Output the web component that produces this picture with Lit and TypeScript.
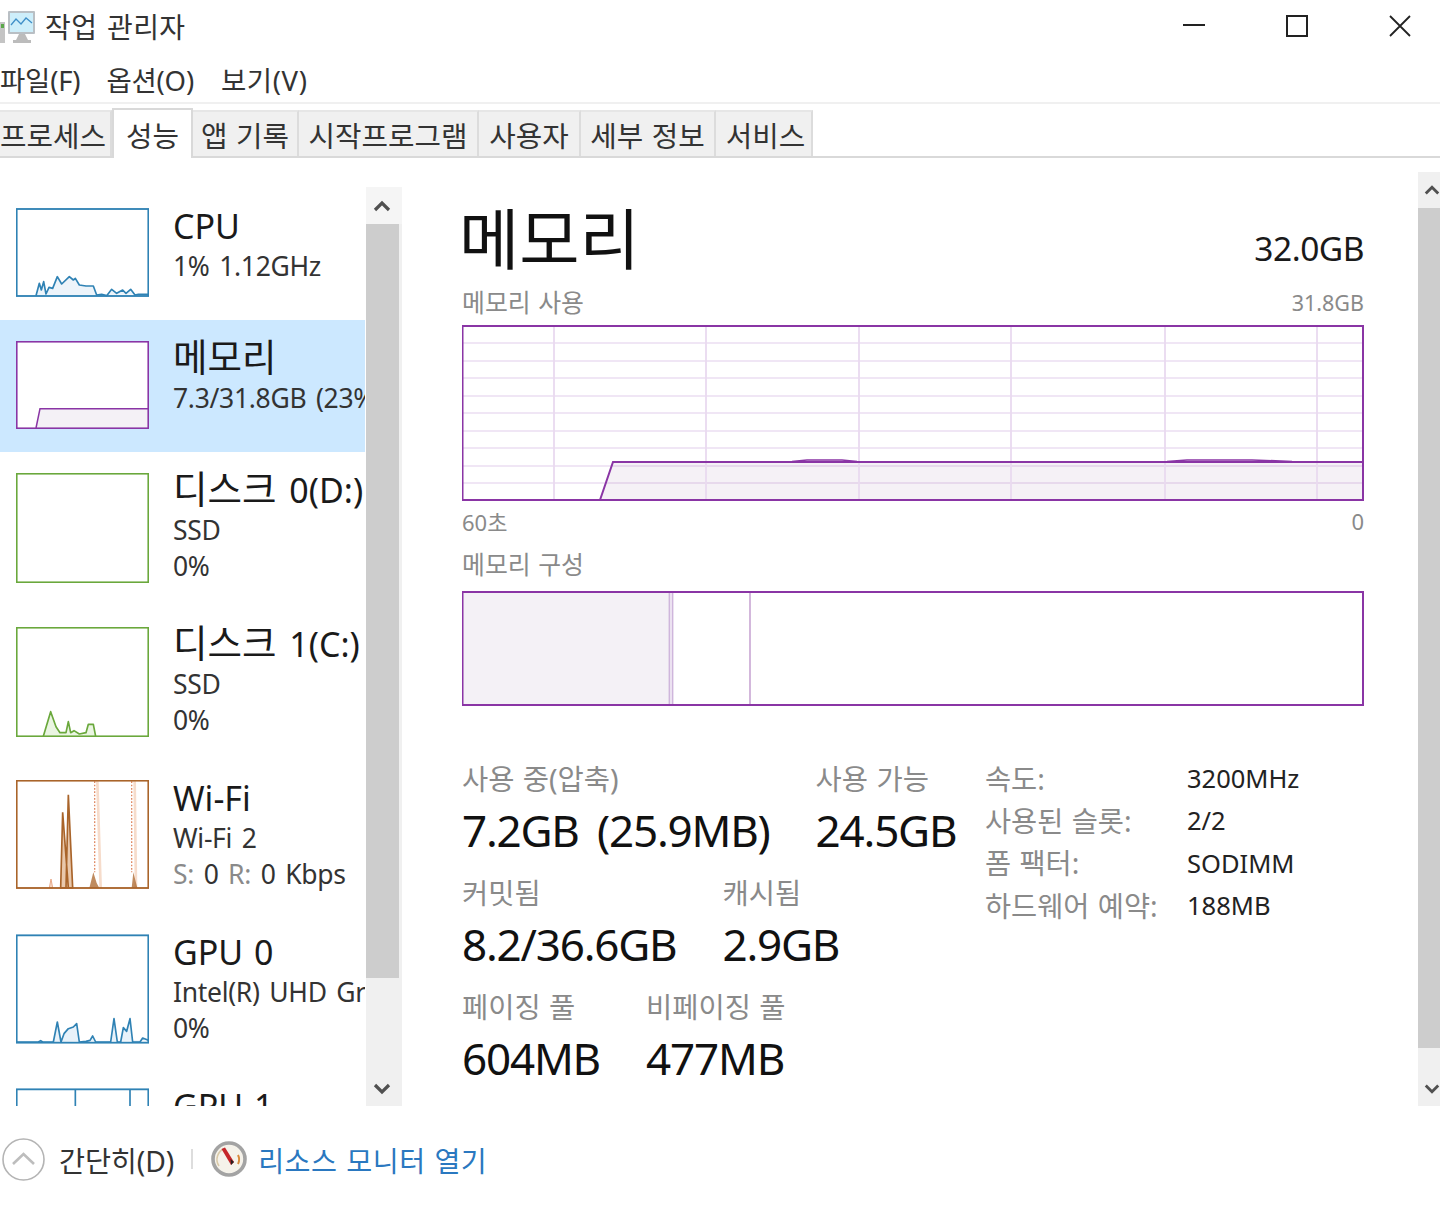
import { LitElement, html, css, svg } from "lit";
import { customElement } from "lit/decorators.js";

const BLUE = "#2f82b4";
const GREEN = "#6aa83c";
const ORANGE = "#a9642a";
const PURPLE = "#8a35a5";

const chevron = (up: boolean) => html`<svg class="chev" width="18" height="14" viewBox="0 0 18 14">
  <path d=${up ? "M2 11 L9 4 L16 11" : "M2 3 L9 10 L16 3"} fill="none" stroke="#505050" stroke-width="3.2"/></svg>`;

const line = (pts: string, color: string, fill: string) => svg`
  <polygon points=${pts} fill=${fill} stroke="none"/>
  <polyline points=${pts} fill="none" stroke=${color} stroke-width="5" stroke-linejoin="round"/>`;

const thumbs: Record<string, any> = {
  cpu: html`<svg class="thumb" style="height:89px" viewBox="48 25 399 265">
    ${line("108,287 118,250 124,270 131,245 138,282 147,262 158,265 172,230 185,252 208,230 220,240 226,235 238,255 258,258 280,258 290,285 305,283 320,287 335,268 350,280 368,270 378,280 392,268 405,285 415,283 445,283", BLUE, "#edf4fa")}
    <rect x="50" y="27" width="395" height="261" fill="none" stroke=${BLUE} stroke-width="5.5"/></svg>`,
  mem: html`<svg class="thumb" style="height:88px" viewBox="48 453 399 264">
    <polygon points="108,714 120,656 445,656 445,714" fill="#f4f1f6"/>
    <polyline points="108,714 120,656 445,656" fill="none" stroke=${PURPLE} stroke-width="4.5"/>
    <rect x="50" y="455" width="395" height="260" fill="none" stroke=${PURPLE} stroke-width="5.5"/></svg>`,
  d0: html`<svg class="thumb" style="height:110px" viewBox="48 45 399 330">
    <rect x="50" y="47" width="395" height="326" fill="#fff" stroke=${GREEN} stroke-width="5.5"/></svg>`,
  d1: html`<svg class="thumb" style="height:110px" viewBox="48 45 399 330" preserveAspectRatio="none">
    <g transform="translate(0,44)">${line("130,329 152,255 168,300 180,318 198,318 205,285 212,318 222,312 238,322 258,318 265,293 280,293 287,329", GREEN, "#eaf5e2")}</g>
    <rect x="50" y="47" width="395" height="326" fill="none" stroke=${GREEN} stroke-width="5.5"/></svg>`,
  wifi: html`<svg class="thumb" style="height:110px" viewBox="48 31 399 330">
    <path d="M288 35 L298 355 L306 355 L296 35 Z M400 35 L404 355 L412 355 L408 35 Z" fill="#f6dccb"/>
    <path d="M284 35 V308 M395 35 V308" stroke="#e08a63" stroke-width="4" stroke-dasharray="5 5" fill="none"/>
    <path d="M148 355 L153 328 L158 355 Z" fill="#f6dccb" stroke="#e8a888" stroke-width="3"/>
    <path d="M182 355 L188 128 L205 355 Z M198 355 L205 75 L218 355 Z" fill="#e9c8ac" stroke=${ORANGE} stroke-width="5"/>
    <path d="M268 355 L280 308 L290 340 L298 355 Z M395 355 L400 308 L412 355 Z" fill=${ORANGE} opacity=".75"/>
    <rect x="50" y="33" width="395" height="322" fill="none" stroke=${ORANGE} stroke-width="5.5"/></svg>`,
  gpu0: html`<svg class="thumb" style="height:110px" viewBox="48 28 399 326">
    ${line("50,350 115,350 122,346 128,350 160,350 172,290 183,350 192,325 205,310 220,305 230,295 238,350 258,348 270,345 278,332 287,350 332,350 342,280 352,350 362,350 370,307 380,318 390,280 398,350 420,350 428,338 445,345", BLUE, "#e8f2fa")}
    <rect x="50" y="30" width="395" height="322" fill="none" stroke=${BLUE} stroke-width="5.5"/></svg>`,
  gpu1: html`<svg class="thumb" style="height:110px" viewBox="48 28 399 326">
    <path d="M226 30 V352 M390 30 V352" stroke=${BLUE} stroke-width="5" fill="none"/>
    <rect x="50" y="30" width="395" height="322" fill="none" stroke=${BLUE} stroke-width="5.5"/></svg>`,
};

const items = [
  { k: "cpu", h: 133, n: "CPU", s: ["1% 1.12GHz"] },
  { k: "mem", h: 132, n: html`<span class="ko">메모리</span>`, s: ["7.3/31.8GB (23%)"], sel: true, up: true },
  { k: "d0", h: 154, n: html`<span class="ko">디스크</span> 0(D:)`, s: ["SSD", "0%"], up: true },
  { k: "d1", h: 153, n: html`<span class="ko">디스크</span> 1(C:)`, s: ["SSD", "0%"], up: true },
  { k: "wifi", h: 154, n: "Wi-Fi", s: ["Wi-Fi 2", html`<span class="dim">S:</span> 0 <span class="dim">R:</span> 0 Kbps`] },
  { k: "gpu0", h: 154, n: "GPU 0", s: ["Intel(R) UHD Graphics 620", "0%"] },
  { k: "gpu1", h: 154, n: "GPU 1", s: [] },
];

@customElement("app-root")
export class AppRoot extends LitElement {
  static styles = css`
    :host {
      display: block;
      width: 1440px;
      height: 1206px;
      overflow: hidden;
      background: #fff;
      color: #1c1c1c;
      font-family: "Noto Sans", "Noto Sans CJK KR", sans-serif;
      word-spacing: 1px;
    }
    .title { height: 52px; display: flex; align-items: center; }
    .title .name { font-size: 28px; margin-left: 8px; color: #333; letter-spacing: .4px; word-spacing: 2px; }
    .ctl { margin-left: auto; display: flex; gap: 81px; padding-right: 29px; }
    .menu { height: 52px; padding-top: 4px; box-sizing: border-box; display: flex; align-items: center; gap: 26px; font-size: 27.500px; color: #333; border-bottom: 2px solid #f0f0f0; letter-spacing: -.2px; }
    .menu span:last-child { margin-left: 1px; letter-spacing: .6px; }
    .tabs { height: 54px; box-sizing: border-box; display: flex; align-items: flex-end; border-bottom: 2px solid #d9d9d9; font-size: 28.800px; color: #333; }
    .tab { height: 44px; background: #f0f0f0; border-right: 2px solid #dcdcdc; border-top: 2px solid #e6e6e6; display: flex; align-items: center; justify-content: center; flex: none; white-space: nowrap; }
    .tab:last-child { text-indent: 4px; }
    .tab.first { justify-content: flex-start; }
    .tab.on { height: 48px; margin-bottom: -2px; background: #fff; border: 2px solid #d9d9d9; border-bottom: 0; }
    .main { height: 948px; display: flex; }
    .side { width: 402px; flex: none; padding-top: 29px; box-sizing: border-box; display: flex; gap: 1px; }
    .list { width: 365px; overflow: hidden; }
    .item { display: flex; box-sizing: border-box; padding: 21px 0 0 16px; gap: 24px; white-space: nowrap; overflow: hidden; }
    .item.sel { background: #cce8ff; }
    .item.up .info { margin-top: -2px; }
    .thumb { width: 133px; flex: none; display: block; background: #fff; }
    .info { display: flex; flex-direction: column; min-width: 0; }
    .n { font-size: 34px; line-height: 38px; margin-top: -1px; margin-bottom: 3px; color: #1a1a1a; word-spacing: 2px; }
    .ko { font-size: 37.500px; margin-right: 2px; }
    .s { font-size: 26.500px; line-height: 36px; color: #333; letter-spacing: -.3px; word-spacing: 3px; }
    .dim { color: #8a8a8a; }
    .bar { width: 36px; background: #f0f0f0; display: flex; flex-direction: column; }
    .bar .cap { height: 37px; display: flex; align-items: center; justify-content: center; background: #f5f5f5; padding-right: 4px; }
    .bar .th { height: 754px; width: 33px; background: #cdcdcd; }
    .bar .rest { flex: 1; display: flex; align-items: flex-end; justify-content: center; padding: 0 4px 10px 0; }
    .content { width: 902px; margin-left: 60px; flex: none; padding-top: 40px; box-sizing: border-box; }
    .h { display: flex; justify-content: space-between; align-items: center; height: 80px; }
    .h .big { font-size: 65.500px; line-height: 80px; color: #111; margin-left: -3px; padding-top: 2px; }
    .h .cap { font-size: 33.500px; margin-top: 20px; color: #1a1a1a; letter-spacing: -.5px; }
    .lab { display: flex; justify-content: space-between; align-items: center; height: 32px; margin-top: 7px; margin-bottom: 8px; font-size: 24.900px; color: #8a8a8a; }
    .lab .r { font-size: 21.500px; margin-top: 2px; }
    .chart { display: block; width: 902px; height: 176px; }
    .axis { display: flex; justify-content: space-between; align-items: center; height: 34px; margin-top: 3px; margin-bottom: 2px; font-size: 22px; color: #8a8a8a; }
    .lab2 { height: 32px; line-height: 32px; margin: 10px 0 11px; font-size: 24.900px; color: #8a8a8a; }
    .comp { display: block; width: 902px; height: 115px; }
    .stats { display: flex; margin-top: 54px; }
    .left { width: 523px; flex: none; display: flex; flex-direction: column; gap: 16px; }
    .row { display: flex; gap: 46px; }
    .st .l { font-size: 28.500px; line-height: 38px; height: 38px; color: #8a8a8a; white-space: nowrap; }
    .st .v { font-size: 44px; line-height: 56px; margin-top: 4px; color: #111; white-space: nowrap; letter-spacing: -1.200px; word-spacing: 8px; }
    .tbl { display: grid; grid-template-columns: 202px auto; grid-auto-rows: 42.300px; margin-top: -4px; align-items: center; font-size: 28.400px; }
    .tbl .k { color: #8a8a8a; white-space: nowrap; }
    .tbl .x { color: #222; font-size: 25.500px; padding-top: 2px; }
    .vs { margin-left: 54px; width: 22px; margin-top: 14px; background: #f0f0f0; overflow: hidden; display: flex; flex-direction: column; flex: none; }
    .vs .cap { height: 36px; display: flex; align-items: center; padding-left: 6px; box-sizing: border-box; }
    .vs .th { height: 840px; background: #cdcdcd; }
    .vs .rest { flex: 1; display: flex; align-items: flex-end; padding: 0 0 10px 6px; }
    .foot { height: 100px; display: flex; align-items: center; padding: 6px 0 0 2px; box-sizing: border-box; }
    .foot .t { margin-left: 14px; color: #333; font-size: 28.300px; letter-spacing: -.1px; }
    .sep { width: 2px; height: 20px; background: #ddd; margin: 0 18px 0 17px; }
    .link { margin-left: 11px; color: #2a78c0; font-size: 28.200px; letter-spacing: .5px; }
  `;

  renderChart() {
    const hs = [18, 36, 53, 71, 88, 106, 123, 141, 158];
    const vs = [92, 244, 397, 549, 703, 855];
    return html`<svg class="chart" viewBox="0 0 902 176">
      ${hs.map((y) => svg`<line x1="0" x2="902" y1=${y} y2=${y} stroke="#f0e6f5" stroke-width="1.8"/>`)}
      <polygon points="138,175 151,137 325,137 345,135 380,135 395,137 705,137 725,135 790,135 830,137 901,137 901,175" fill="#6b3f80" fill-opacity=".07"/>
      ${vs.map((x) => svg`<line x1=${x} x2=${x} y1="0" y2="176" stroke="#e9daf0" stroke-width="1.8"/>`)}
      <polyline points="138,175 151,137 901,137" fill="none" stroke=${PURPLE} stroke-width="2"/>
      <polyline points="330,136.500 345,135 380,135 395,136.500" fill="none" stroke=${PURPLE} stroke-width="1.6"/>
      <polyline points="705,136.500 725,135 790,135 830,136.500" fill="none" stroke=${PURPLE} stroke-width="1.6"/>
      <rect x=".5" y="1" width="900.500" height="174" fill="none" stroke=${PURPLE} stroke-width="2"/>
    </svg>`;
  }

  renderComp() {
    return html`<svg class="comp" viewBox="0 0 902 115">
      <rect x="1" y="1" width="206" height="113" fill="#f4f1f6"/>
      <line x1="207.500" x2="207.500" y1="1" y2="114" stroke="#cfb6dc" stroke-width="1.800"/>
      <line x1="210.500" x2="210.500" y1="1" y2="114" stroke="#cfb6dc" stroke-width="1.800"/>
      <line x1="288" x2="288" y1="1" y2="114" stroke="#cfb0d8" stroke-width="1.800"/>
      <rect x=".5" y="1" width="900.500" height="113" fill="none" stroke=${PURPLE} stroke-width="2"/>
    </svg>`;
  }

  render() {
    const tabs = [["프로세스", 112], ["성능", 79], ["앱 기록", 106], ["시작프로그램", 180], ["사용자", 102], ["세부 정보", 135], ["서비스", 97]] as [string, number][];
    return html`
      <div class="title">
        <svg width="37" height="34" viewBox="0 0 37 34" style="margin-top:2px">
          <rect x="0" y="12" width="5" height="21" fill="#c4c4c4"/><rect x="1" y="14" width="3" height="4" fill="#5aa84a"/>
          <rect x="8" y="1" width="27" height="23" rx="1" fill="#b9bfc4"/><rect x="10" y="3" width="23" height="19" fill="#cdeefa"/>
          <polyline points="11,15 16,9 21,14 26,8 32,13" fill="none" stroke="#3f8fc8" stroke-width="1.3"/>
          <path d="M19 24 h6 l3 6 h3 v3 h-18 v-3 h3 z" fill="#bcbcbc"/>
        </svg>
        <span class="name">작업 관리자</span>
        <div class="ctl">
          <svg width="22" height="22" viewBox="0 0 22 22"><line x1="0" x2="22" y1="10" y2="10" stroke="#222" stroke-width="2"/></svg>
          <svg width="22" height="22" viewBox="0 0 22 22"><rect x="1" y="1" width="20" height="20" fill="none" stroke="#222" stroke-width="2"/></svg>
          <svg width="22" height="22" viewBox="0 0 22 22"><path d="M1 1 L21 21 M21 1 L1 21" stroke="#222" stroke-width="1.8"/></svg>
        </div>
      </div>
      <div class="menu"><span>파일(F)</span><span>옵션(O)</span><span>보기(V)</span></div>
      <div class="tabs">
        ${tabs.map(([t, w], i) => html`<div class="tab ${i === 1 ? "on" : ""} ${i === 0 ? "first" : ""}" style="width:${w - 2}px">${t}</div>`)}
      </div>
      <div class="main">
        <div class="side">
          <div class="list">
            ${items.map((it: any) => html`<div class="item ${it.sel ? "sel" : ""} ${it.up ? "up" : ""}" style="height:${it.h}px">
              ${thumbs[it.k]}
              <div class="info"><div class="n">${it.n}</div>${it.s.map((x: any) => html`<div class="s">${x}</div>`)}</div>
            </div>`)}
          </div>
          <div class="bar">
            <div class="cap">${chevron(true)}</div>
            <div class="th"></div>
            <div class="rest">${chevron(false)}</div>
          </div>
        </div>
        <div class="content">
          <div class="h"><span class="big">메모리</span><span class="cap">32.0GB</span></div>
          <div class="lab"><span>메모리 사용</span><span class="r">31.8GB</span></div>
          ${this.renderChart()}
          <div class="axis"><span>60초</span><span>0</span></div>
          <div class="lab2">메모리 구성</div>
          ${this.renderComp()}
          <div class="stats">
            <div class="left">
              <div class="row">
                <div class="st"><div class="l">사용 중(압축)</div><div class="v">7.2GB (25.9MB)</div></div>
                <div class="st"><div class="l">사용 가능</div><div class="v">24.5GB</div></div>
              </div>
              <div class="row">
                <div class="st"><div class="l">커밋됨</div><div class="v">8.2/36.6GB</div></div>
                <div class="st"><div class="l">캐시됨</div><div class="v">2.9GB</div></div>
              </div>
              <div class="row">
                <div class="st"><div class="l">페이징 풀</div><div class="v">604MB</div></div>
                <div class="st"><div class="l">비페이징 풀</div><div class="v">477MB</div></div>
              </div>
            </div>
            <div class="tbl">
              <span class="k">속도:</span><span class="x">3200MHz</span>
              <span class="k">사용된 슬롯:</span><span class="x">2/2</span>
              <span class="k">폼 팩터:</span><span class="x">SODIMM</span>
              <span class="k">하드웨어 예약:</span><span class="x">188MB</span>
            </div>
          </div>
        </div>
        <div class="vs">
          <div class="cap">${chevron(true)}</div>
          <div class="th"></div>
          <div class="rest">${chevron(false)}</div>
        </div>
      </div>
      <div class="foot">
        <svg width="43" height="43" viewBox="0 0 43 43"><circle cx="21.500" cy="21.500" r="20.500" fill="#fff" stroke="#b4b4b4" stroke-width="1.6"/><path d="M11 26 L21.500 16 L32 26" fill="none" stroke="#bdbdbd" stroke-width="2.6"/></svg>
        <span class="t">간단히(D)</span>
        <span class="sep"></span>
        <svg width="36" height="36" viewBox="0 0 36 36"><circle cx="18" cy="18" r="16" fill="#f5f2ea" stroke="#a3a3a3" stroke-width="3.600"/><path d="M8 25 A11.500 11.500 0 0 1 14 7.500" fill="none" stroke="#d9c9a8" stroke-width="1.600"/><path d="M27 14 a10 10 0 0 1 0 9" fill="none" stroke="#d88a3a" stroke-width="2"/><path d="M10.500 8 L14 6.500 L23 21 L20 24 Z" fill="#c5262a"/><path d="M19.500 18 L23 21 L20 24 Z" fill="#2a2020"/></svg>
        <span class="link">리소스 모니터 열기</span>
      </div>
    `;
  }
}
